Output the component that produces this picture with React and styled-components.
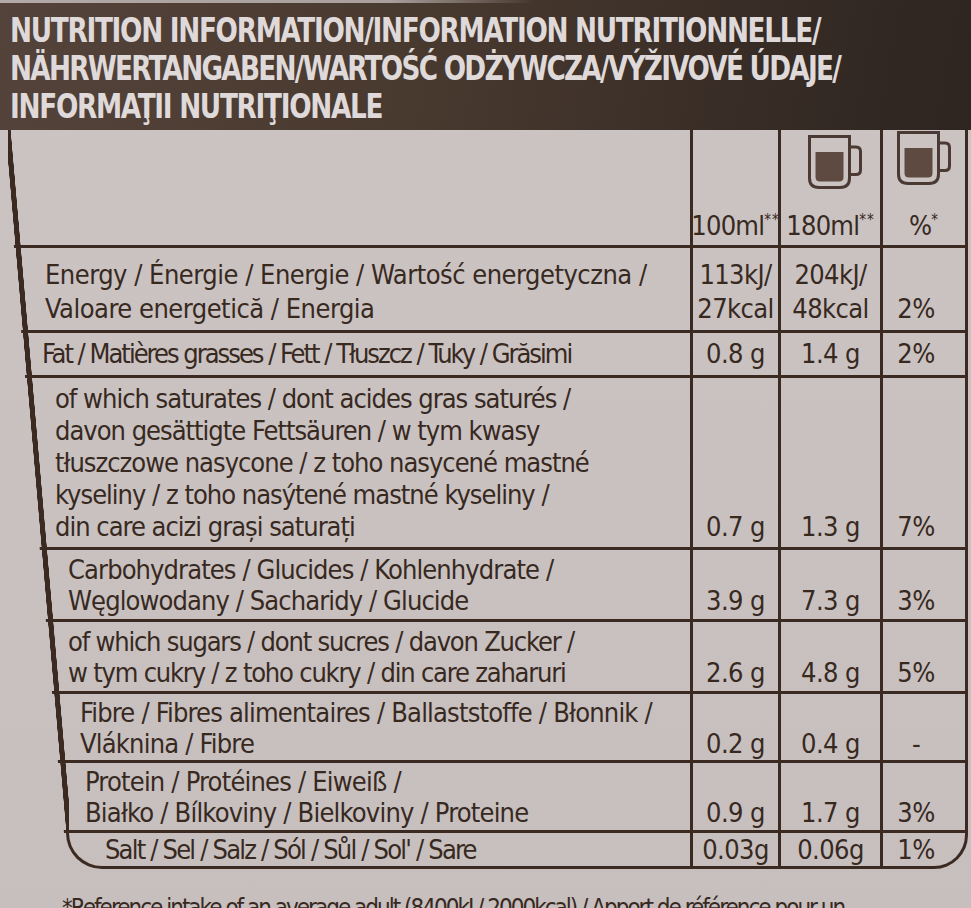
import React from "react";
import styled, { createGlobalStyle } from "styled-components";

const GlobalStyle = createGlobalStyle`
  body {
    margin: 0;
    background: linear-gradient(180deg, #cbc4c3 0%, #c6bfbe 100%);
    overflow: hidden;
    font-family: "DejaVu Sans Condensed", "Liberation Sans", sans-serif;
    color: #38291f;
  }
`;

const LINE = "#3b2a21";

// pl = where the text starts (the photo is shot at an angle, so it drifts right)
const rows = [
  {
    label: ["Energy / Énergie / Energie / Wartość energetyczna /", "Valoare energetică / Energia"],
    values: [["113kJ/", "27kcal"], ["204kJ/", "48kcal"], ["2%"]],
    pl: 45, ls: -0.5, pt: 10, pb: 4, lh: 34,
  },
  {
    label: ["Fat / Matières grasses / Fett / Tłuszcz / Tuky / Grăsimi"],
    values: [["0.8 g"], ["1.4 g"], ["2%"]],
    pl: 42, ls: -2, pt: 4, pb: 4, lh: 34,
  },
  {
    label: [
      "of which saturates / dont acides gras saturés /",
      "davon gesättigte Fettsäuren / w tym kwasy",
      "tłuszczowe nasycone / z toho nasycené mastné",
      "kyseliny / z toho nasýtené mastné kyseliny /",
      "din care acizi grași saturați",
    ],
    values: [["0.7 g"], ["1.3 g"], ["7%"]],
    pl: 55, ls: -1, pt: 5, pb: 4, lh: 32,
  },
  {
    label: ["Carbohydrates / Glucides / Kohlenhydrate /", "Węglowodany / Sacharidy / Glucide"],
    values: [["3.9 g"], ["7.3 g"], ["3%"]],
    pl: 68, ls: -0.9, pt: 4, pb: 3, lh: 31,
  },
  {
    label: ["of which sugars / dont sucres / davon Zucker /", "w tym cukry / z toho cukry / din care zaharuri"],
    values: [["2.6 g"], ["4.8 g"], ["5%"]],
    pl: 68, ls: -1.2, pt: 4, pb: 3, lh: 31,
  },
  {
    label: ["Fibre / Fibres alimentaires / Ballaststoffe / Błonnik /", "Vláknina / Fibre"],
    values: [["0.2 g"], ["0.4 g"], ["-"]],
    pl: 80, ls: -0.8, pt: 3, pb: 1, lh: 31,
  },
  {
    label: ["Protein / Protéines / Eiweiß /", "Białko / Bílkoviny / Bielkoviny / Proteine"],
    values: [["0.9 g"], ["1.7 g"], ["3%"]],
    pl: 85, ls: -0.8, pt: 3, pb: 2, lh: 31,
  },
];

const salt = {
  label: ["Salt / Sel / Salz / Sól / Sůl / Sol' / Sare"],
  values: [["0.03g"], ["0.06g"], ["1%"]],
  pl: 36, ls: -1.8, pt: 0, pb: 0, lh: 33,
};

function Mug() {
  return (
    <svg width="56" height="56" viewBox="0 0 56 56">
      <path
        d="M2.5 2.5 H42.5 V44 Q42.5 53.5 33 53.5 H12 Q2.5 53.5 2.5 44 Z"
        fill="none"
        stroke="#4a3a33"
        strokeWidth="3"
      />
      <path
        d="M42.5 13 H49 Q53.5 13 53.5 17.5 V36 Q53.5 40.5 49 40.5 H42.5"
        fill="none"
        stroke="#4a3a33"
        strokeWidth="3"
      />
      <path d="M8.5 18 H36.5 V43 Q36.5 47.5 32 47.5 H13 Q8.5 47.5 8.5 43 Z" fill="#5e4a40" />
    </svg>
  );
}

function RowCells({ row }) {
  return (
    <>
      <Label $pt={row.pt} $pb={row.pb} $pl={row.pl} $ls={row.ls}>
        {row.label.map((line, j) => (
          <span key={j}>{line}</span>
        ))}
      </Label>
      {row.values.map((v, k) => (
        <Value key={k} $pt={row.pt} $pb={row.pb} $pct={k === 2}>
          {v.map((line, j) => (
            <span key={j}>{line}</span>
          ))}
        </Value>
      ))}
    </>
  );
}

export default function App() {
  return (
    <Page>
      <GlobalStyle />
      <Banner>
        <Title>
          <TitleLine $ls={-1.5}>NUTRITION INFORMATION/INFORMATION NUTRITIONNELLE/</TitleLine>
          <TitleLine $ls={-2}>NÄHRWERTANGABEN/WARTOŚĆ ODŻYWCZA/VÝŽIVOVÉ ÚDAJE/</TitleLine>
          <TitleLine $ls={-1.5}>INFORMAŢII NUTRIŢIONALE</TitleLine>
        </Title>
      </Banner>
      <Table>
        <HeadRow>
          <HeadCell />
          <HeadCell $line>
            <Unit>
              100ml<Sup>**</Sup>
            </Unit>
          </HeadCell>
          <HeadCell $line>
            <MugWrap $shift={8}>
              <Mug />
            </MugWrap>
            <Unit>
              180ml<Sup>**</Sup>
            </Unit>
          </HeadCell>
          <HeadCell $line>
            <MugWrap $shift={0} $up>
              <Mug />
            </MugWrap>
            <Unit>
              %<Sup>*</Sup>
            </Unit>
          </HeadCell>
        </HeadRow>
        {rows.map((row, i) => (
          <Row key={i} $lh={row.lh}>
            <RowCells row={row} />
          </Row>
        ))}
        <LastRow $lh={salt.lh}>
          <RowCells row={salt} />
        </LastRow>
      </Table>
      <Footnote>*Reference intake of an average adult (8400kJ / 2000kcal) / Apport de référence pour un</Footnote>
    </Page>
  );
}

const Page = styled.div`
  width: 971px;
  min-height: 908px;
`;

const Banner = styled.header`
  background:
    linear-gradient(90deg, #b3a9a7 0%, #a99f9d 40%, rgba(80, 64, 56, 0) 55%) top / 100% 3px no-repeat,
    linear-gradient(100deg, #54433a 0%, #48392f 45%, #362b25 80%, #2e2520 100%);
  padding: 11px 0 7px 10px;
  height: 112px;
  overflow: hidden;
`;

const Title = styled.h1`
  margin: 0;
  display: flex;
  flex-direction: column;
  font-size: 34px;
  line-height: 38px;
  font-weight: 700;
  color: #dfd9d9;
  white-space: nowrap;
  transform: scaleX(0.86);
  transform-origin: left top;
`;

const TitleLine = styled.span`
  letter-spacing: ${(p) => p.$ls}px;
`;

/* the left edge of the printed table runs at a slant in the photo:
   a clip keeps the rows right of it and a gradient draws the line itself */
const Table = styled.div`
  width: 968px;
  display: flex;
  flex-direction: column;
  clip-path: polygon(4px 0, 100% 0, 100% 100%, 64px 100%, 64px calc(100% - 36px));
  background: linear-gradient(
      to top right,
      transparent calc(50% - 2.8px),
      ${LINE} calc(50% - 2.4px),
      ${LINE} calc(50% + 2.4px),
      transparent calc(50% + 2.8px)
    )
    8px 0 / 61px calc(100% - 36px) no-repeat;
`;

const HeadRow = styled.div`
  display: grid;
  grid-template-columns: 1fr 88px 102px 85px;
  height: 115px;
  border-right: 3px solid ${LINE};
  border-bottom: 3px solid ${LINE};
`;

const HeadCell = styled.div`
  display: flex;
  flex-direction: column;
  align-items: center;
  justify-content: flex-end;
  padding-bottom: 10px;
  border-left: ${(p) => (p.$line ? `3px solid ${LINE}` : "none")};
`;

const MugWrap = styled.div`
  margin-left: ${(p) => p.$shift}px;
  margin-bottom: ${(p) => (p.$up ? 18 : 14)}px;
  height: 56px;
`;

const Unit = styled.div`
  font-size: 27px;
  line-height: 32px;
  white-space: nowrap;
  letter-spacing: -0.8px;
`;

const Sup = styled.span`
  font-size: 15px;
  vertical-align: 10px;
  letter-spacing: 1px;
`;

const Row = styled.div`
  display: grid;
  grid-template-columns: 1fr 88px 102px 85px;
  border-right: 3px solid ${LINE};
  border-bottom: 3px solid ${LINE};
  font-size: 27px;
  line-height: ${(p) => p.$lh}px;
`;

const LastRow = styled(Row)`
  margin-left: 66px;
  border-left: 3px solid ${LINE};
  border-radius: 0 0 34px 36px;
`;

const Label = styled.div`
  display: flex;
  flex-direction: column;
  padding: ${(p) => p.$pt}px 0 ${(p) => p.$pb}px ${(p) => p.$pl}px;
  letter-spacing: ${(p) => p.$ls}px;
  white-space: nowrap;
`;

const Value = styled.div`
  display: flex;
  flex-direction: column;
  justify-content: flex-end;
  align-items: center;
  padding: ${(p) => p.$pt}px ${(p) => (p.$pct ? 16 : 0)}px ${(p) => p.$pb}px 0;
  border-left: 3px solid ${LINE};
  letter-spacing: -0.6px;
  white-space: nowrap;
`;

const Footnote = styled.p`
  margin: 24px 0 0 62px;
  font-size: 24px;
  line-height: 30px;
  letter-spacing: -2px;
  white-space: nowrap;
`;
